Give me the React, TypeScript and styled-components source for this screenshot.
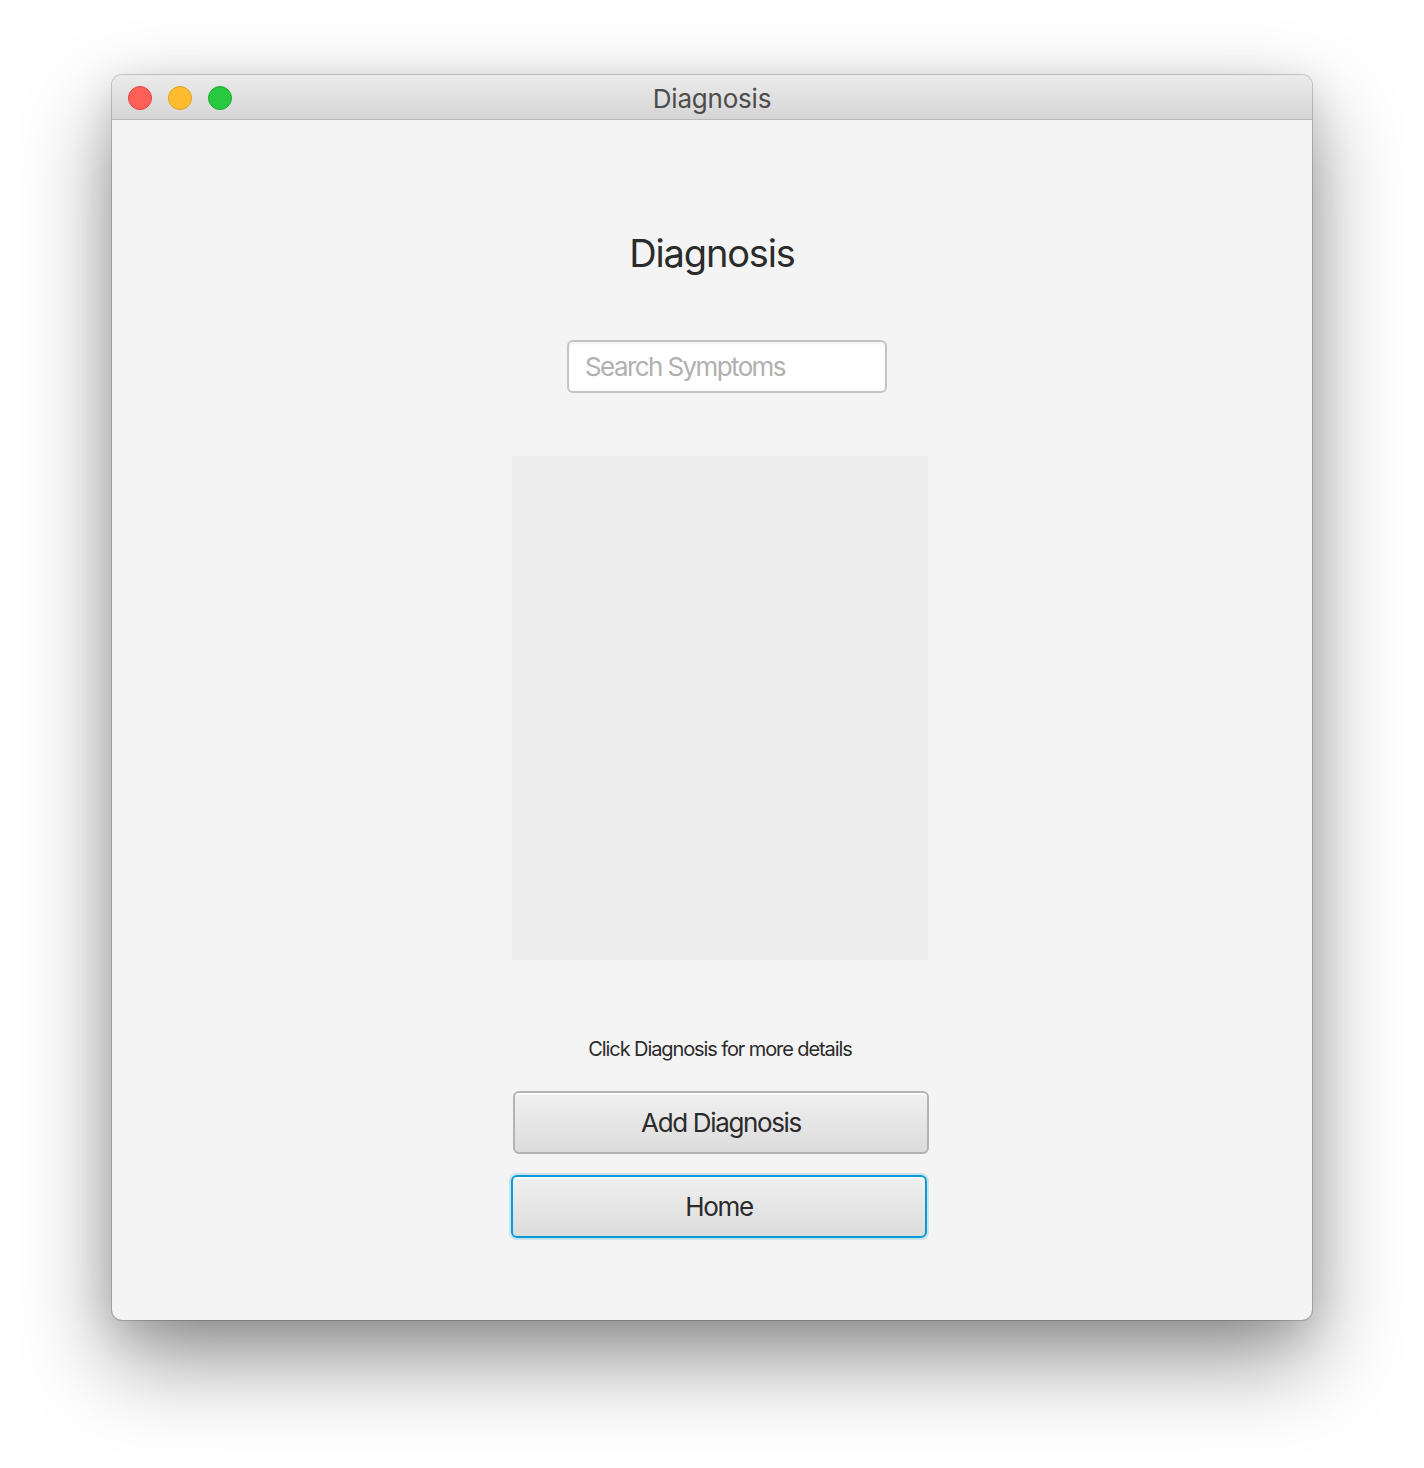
import React from "react";
import styled, { createGlobalStyle } from "styled-components";

const Global = createGlobalStyle`
  html, body { margin: 0; padding: 0; background: #ffffff; }
  body { font-family: Inter, "Liberation Sans", sans-serif; -webkit-font-smoothing: antialiased; }
`;

const Stage = styled.div`
  width: 1424px;
  height: 1468px;
  padding: 75px 0 0 112px;
  box-sizing: border-box;
  overflow: hidden;
  background: #ffffff;
`;

const Window = styled.div`
  width: 1200px;
  height: 1245px;
  border-radius: 10px;
  overflow: hidden;
  background: #f4f4f4;
  box-shadow: 0 0 0 1px rgba(0, 0, 0, 0.18), 0 40px 90px rgba(0, 0, 0, 0.42),
    0 10px 40px rgba(0, 0, 0, 0.12);
  display: flex;
  flex-direction: column;
`;

const TitleBar = styled.div`
  position: relative;
  height: 44px;
  flex: 0 0 44px;
  background: linear-gradient(#ebebeb, #d5d5d5);
  border-bottom: 1px solid #b8b8b8;
  display: flex;
  align-items: center;
  justify-content: center;
`;

const Lights = styled.div`
  position: absolute;
  left: 16px;
  top: 11px;
  display: flex;
  gap: 16px;
`;

const Light = styled.span<{ $fill: string; $edge: string }>`
  width: 24px;
  height: 24px;
  border-radius: 50%;
  box-sizing: border-box;
  background: ${(p) => p.$fill};
  border: 1px solid ${(p) => p.$edge};
`;

const WindowTitle = styled.div`
  font-size: 26px;
  color: #4c4c4c;
  letter-spacing: -0.2px;
  margin-top: 3px;
`;

const Content = styled.div`
  flex: 1;
  display: flex;
  flex-direction: column;
  padding: 111px 0 0 400px;
`;

const Column = styled.div`
  width: 416px;
  display: flex;
  flex-direction: column;
  align-items: flex-start;
`;

const Heading = styled.h1`
  margin: 0 16px 0 0;
  align-self: center;
  font-size: 38px;
  line-height: 44px;
  font-weight: 400;
  color: #2b2b2b;
  letter-spacing: -1.15px;
`;

const Search = styled.input`
  margin: 65px 0 0 55px;
  width: 320px;
  height: 53px;
  box-sizing: border-box;
  border: 2px solid #c4c4c4;
  border-radius: 6px;
  background: #ffffff;
  box-shadow: inset 0 2px 2px rgba(0, 0, 0, 0.05);
  padding: 0 16px;
  font-family: Inter, "Liberation Sans", sans-serif;
  font-size: 26px;
  color: #333;
  outline: none;
  letter-spacing: -1.6px;
  &::placeholder {
    color: #b0b0b0;
  }
`;

const ListArea = styled.div`
  margin-top: 63px;
  width: 416px;
  height: 504px;
  background: #ededed;
`;

const Hint = styled.div`
  margin-top: 76px;
  align-self: center;
  font-size: 20px;
  line-height: 26px;
  color: #2b2b2b;
  letter-spacing: -1.1px;
`;

const Button = styled.button<{ $focused?: boolean; $top: number; $left: number }>`
  margin: ${(p) => p.$top}px 0 0 ${(p) => p.$left}px;
  width: 416px;
  height: 63px;
  box-sizing: border-box;
  border-radius: 6px;
  border: 2px solid ${(p) => (p.$focused ? "#0a9bd6" : "#b3b3b3")};
  box-shadow: ${(p) =>
    p.$focused
      ? "0 0 0 2px rgba(10,155,214,0.18), inset 0 2px 0 rgba(255,255,255,0.7)"
      : "inset 0 2px 0 rgba(255,255,255,0.8)"};
  background: linear-gradient(#f0f0f0, #dcdcdc);
  font-family: Inter, "Liberation Sans", sans-serif;
  font-size: 26px;
  color: #2b2b2b;
  letter-spacing: -1.35px;
  display: flex;
  align-items: center;
  justify-content: center;
  padding: 0;
  cursor: pointer;
`;

export default function App() {
  return (
    <>
      <Global />
      <Stage>
        <Window>
          <TitleBar>
            <Lights>
              <Light $fill="#fe5f57" $edge="#e1443d" />
              <Light $fill="#febc2e" $edge="#dfa023" />
              <Light $fill="#28c840" $edge="#1aab29" />
            </Lights>
            <WindowTitle>Diagnosis</WindowTitle>
          </TitleBar>
          <Content>
            <Column>
              <Heading>Diagnosis</Heading>
              <Search placeholder="Search Symptoms" />
              <ListArea />
              <Hint>Click Diagnosis for more details</Hint>
              <Button $top={29} $left={1}>Add Diagnosis</Button>
              <Button $top={21} $left={-1} $focused>Home</Button>
            </Column>
          </Content>
        </Window>
      </Stage>
    </>
  );
}
